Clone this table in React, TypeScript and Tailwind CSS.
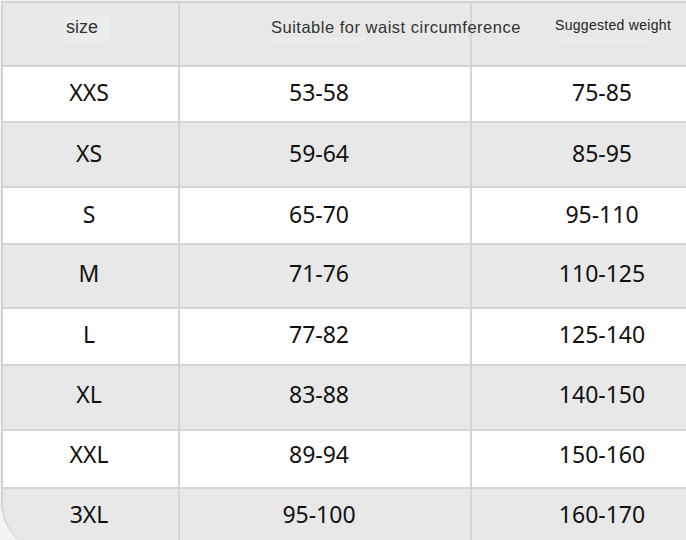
import React from "react";

const rows: { size: string; waist: string; weight: string; h: string; gray: boolean; pb: string }[] = [
  { size: "XXS", waist: "53-58", weight: "75-85", h: "h-[56px]", gray: false, pb: "pb-[4px]" },
  { size: "XS", waist: "59-64", weight: "85-95", h: "h-[65px]", gray: true, pb: "pb-[3px]" },
  { size: "S", waist: "65-70", weight: "95-110", h: "h-[57px]", gray: false, pb: "pb-[3px]" },
  { size: "M", waist: "71-76", weight: "110-125", h: "h-[64px]", gray: true, pb: "pb-[5px]" },
  { size: "L", waist: "77-82", weight: "125-140", h: "h-[57px]", gray: false, pb: "pb-[5px]" },
  { size: "XL", waist: "83-88", weight: "140-150", h: "h-[65px]", gray: true, pb: "pb-[6px]" },
  { size: "XXL", waist: "89-94", weight: "150-160", h: "h-[58px]", gray: false, pb: "pb-[10px]" },
  { size: "3XL", waist: "95-100", weight: "160-170", h: "h-[63px]", gray: true, pb: "pb-[12px]" },
];

export default function App() {
  return (
    <div className="w-[686px] h-[540px] overflow-hidden bg-[#f4f4f4]">
      <div
        className="ml-[1px] mt-[1px] w-[731px] border-l-2 border-t-2 border-[#d2d2d2] rounded-bl-[50px] overflow-hidden text-[#111]"
        style={{ fontFamily: '"Noto Sans", "Liberation Sans", sans-serif' }}
      >
        {/* header */}
        <div
          className="flex h-[64px] border-b-2 border-[#d4d4d4] bg-[#e8e8e8] text-[#333]"
          style={{ fontFamily: '"Liberation Sans", Arial, sans-serif' }}
        >
          <div className="w-[177px] shrink-0 border-r-2 border-[#d4d4d4] pl-[61px] pt-[13px]">
            <span className="inline-block bg-[#ececec] pl-[2px] pr-[12px] pb-[4px] text-[18px] leading-[22px]">size</span>
          </div>
          <div className="w-[292px] shrink-0 border-r-2 border-[#d4d4d4] relative">
            <span className="absolute left-[91px] top-[14px] whitespace-nowrap text-[16.5px] leading-[20px] tracking-[0.5px] text-[#333]">
              Suitable for waist circumference
            </span>
            <span className="absolute left-[90px] top-[35px] w-[96px] h-[7px] rounded-sm bg-[#ebebeb] blur-[1px]" />
          </div>
          <div className="w-[260px] shrink-0 relative">
            <span className="absolute left-[83px] top-[13px] whitespace-nowrap text-[14px] leading-[18px] tracking-[0.3px] text-[#222]">
              Suggested weight
            </span>
            <span className="absolute left-[86px] top-[35px] w-[90px] h-[6px] rounded-sm bg-[#ebebeb] blur-[1px]" />
          </div>
        </div>
        {rows.map((r, i) => (
          <div
            key={r.size}
            className={`flex ${r.h} ${i < rows.length - 1 ? "border-b-2" : ""} border-[#d4d4d4] ${r.gray ? "bg-[#e8e8e8]" : "bg-white"} text-[23px]`}
          >
            <div className={`w-[177px] shrink-0 border-r-2 border-[#d4d4d4] flex items-center justify-center pr-[3px] ${r.pb}`}>
              {r.size}
            </div>
            <div className={`w-[292px] shrink-0 border-r-2 border-[#d4d4d4] flex items-center justify-center pr-[12px] ${r.pb}`}>
              {r.waist}
            </div>
            <div className={`w-[260px] shrink-0 flex items-center justify-center ${r.pb}`}>{r.weight}</div>
          </div>
        ))}
      </div>
    </div>
  );
}
